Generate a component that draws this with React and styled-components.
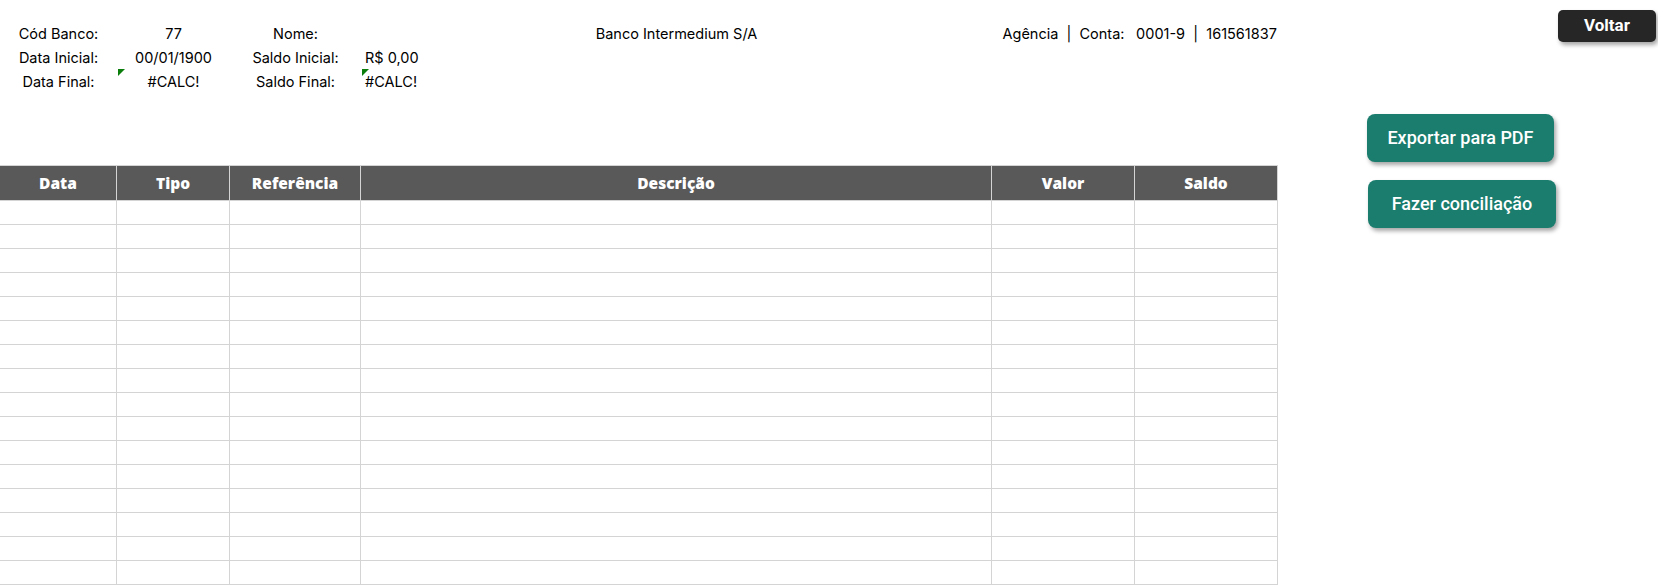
import React from 'react';
import styled, { createGlobalStyle } from 'styled-components';

const GlobalStyle = createGlobalStyle`
    html, body {
        margin: 0;
        padding: 0;
        background: #ffffff;
        overflow: hidden;
    }
    body {
        font-family: Inter, "Noto Sans", sans-serif;
        color: #000000;
    }
    * {
        box-sizing: border-box;
    }
`;

// same column widths for the info block and the table, like a spreadsheet
const COLS = '117px 113px 131px 631px 143px 143px';

const Page = styled.div`
    display: flex;
    width: 1658px;
    height: 585px;
    overflow: hidden;
`;

const Sheet = styled.div`
    width: 1278px;
    flex-shrink: 0;
`;

const Info = styled.div`
    display: grid;
    grid-template-columns: ${COLS};
    grid-auto-rows: 24px;
    padding-top: 21px;
    font-size: 14.5px;
`;

const InfoCell = styled.div`
    position: relative;
    display: flex;
    align-items: center;
    justify-content: ${(p) => (p.$left ? 'flex-start' : 'center')};
    padding-left: ${(p) => (p.$left ? '4px' : '0')};
    white-space: pre;
`;

const ErrorMark = styled.span`
    position: absolute;
    top: 0;
    left: 1px;
    width: 0;
    height: 0;
    border-top: 7px solid #0a7d0a;
    border-right: 7px solid transparent;
`;

const Table = styled.div`
    margin-top: 72px;
    display: grid;
    grid-template-columns: ${COLS};
`;

const HeadCell = styled.div`
    height: 36px;
    background: #595959;
    color: #ffffff;
    font-family: "Open Sans", Lato, sans-serif;
    font-weight: 800;
    font-size: 15.5px;
    display: flex;
    align-items: center;
    justify-content: center;
    border-top: 1px solid #d4d4d4;
    border-right: 1px solid #d4d4d4;
    border-bottom: 1px solid #d4d4d4;
    padding-bottom: 1px;
`;

const BodyCell = styled.div`
    height: 24px;
    border-right: 1px solid #d4d4d4;
    border-bottom: 1px solid #d4d4d4;
`;

const Side = styled.div`
    flex: 1;
    display: flex;
    flex-direction: column;
    align-items: flex-start;
    padding-left: 89px;
`;

const BackButton = styled.button`
    align-self: flex-end;
    margin: 10px 2px 0 0;
    width: 98px;
    height: 32px;
    border: none;
    border-radius: 5px;
    background: #262626;
    color: #ffffff;
    font-family: Roboto, sans-serif;
    font-weight: 700;
    font-size: 17px;
    box-shadow: 2px 3px 4px rgba(0, 0, 0, 0.35);
    padding: 0 0 2px;
`;

const ActionButton = styled.button`
    margin-top: ${(p) => p.$top}px;
    margin-left: ${(p) => p.$shift || 0}px;
    width: ${(p) => p.$width}px;
    height: 48px;
    border: none;
    border-radius: 8px;
    background: #1a7d6d;
    color: #ffffff;
    font-family: Roboto, sans-serif;
    font-weight: 500;
    font-size: 18px;
    box-shadow: 2px 3px 4px rgba(0, 0, 0, 0.35);
    padding: 0 0 2px;
`;

const info = [
    [{ t: 'Cód Banco:' }, { t: '77' }, { t: 'Nome:' }, { t: 'Banco Intermedium S/A' }, { t: 'Agência  |  Conta:' }, { t: '0001-9  |  161561837' }],
    [{ t: 'Data Inicial:' }, { t: '00/01/1900' }, { t: 'Saldo Inicial:' }, { t: 'R$ 0,00', left: true }, { t: '' }, { t: '' }],
    [{ t: 'Data Final:' }, { t: '#CALC!', mark: true }, { t: 'Saldo Final:' }, { t: '#CALC!', left: true, mark: true }, { t: '' }, { t: '' }],
];

const headers = ['Data', 'Tipo', 'Referência', 'Descrição', 'Valor', 'Saldo'];

export default function App() {
    const rows = Array.from({ length: 17 });
    return (
        <>
            <GlobalStyle />
            <Page>
                <Sheet>
                    <Info>
                        {info.map((row, r) =>
                            row.map((c, i) => (
                                <InfoCell key={`${r}-${i}`} $left={c.left}>
                                    {c.mark && <ErrorMark />}
                                    {c.t}
                                </InfoCell>
                            ))
                        )}
                    </Info>
                    <Table>
                        {headers.map((h) => (
                            <HeadCell key={h}>{h}</HeadCell>
                        ))}
                        {rows.map((_, r) =>
                            headers.map((h) => <BodyCell key={`${r}-${h}`} />)
                        )}
                    </Table>
                </Sheet>
                <Side>
                    <BackButton>Voltar</BackButton>
                    <ActionButton $top={72} $width={187}>Exportar para PDF</ActionButton>
                    <ActionButton $top={18} $width={188} $shift={1}>Fazer conciliação</ActionButton>
                </Side>
            </Page>
        </>
    );
}
